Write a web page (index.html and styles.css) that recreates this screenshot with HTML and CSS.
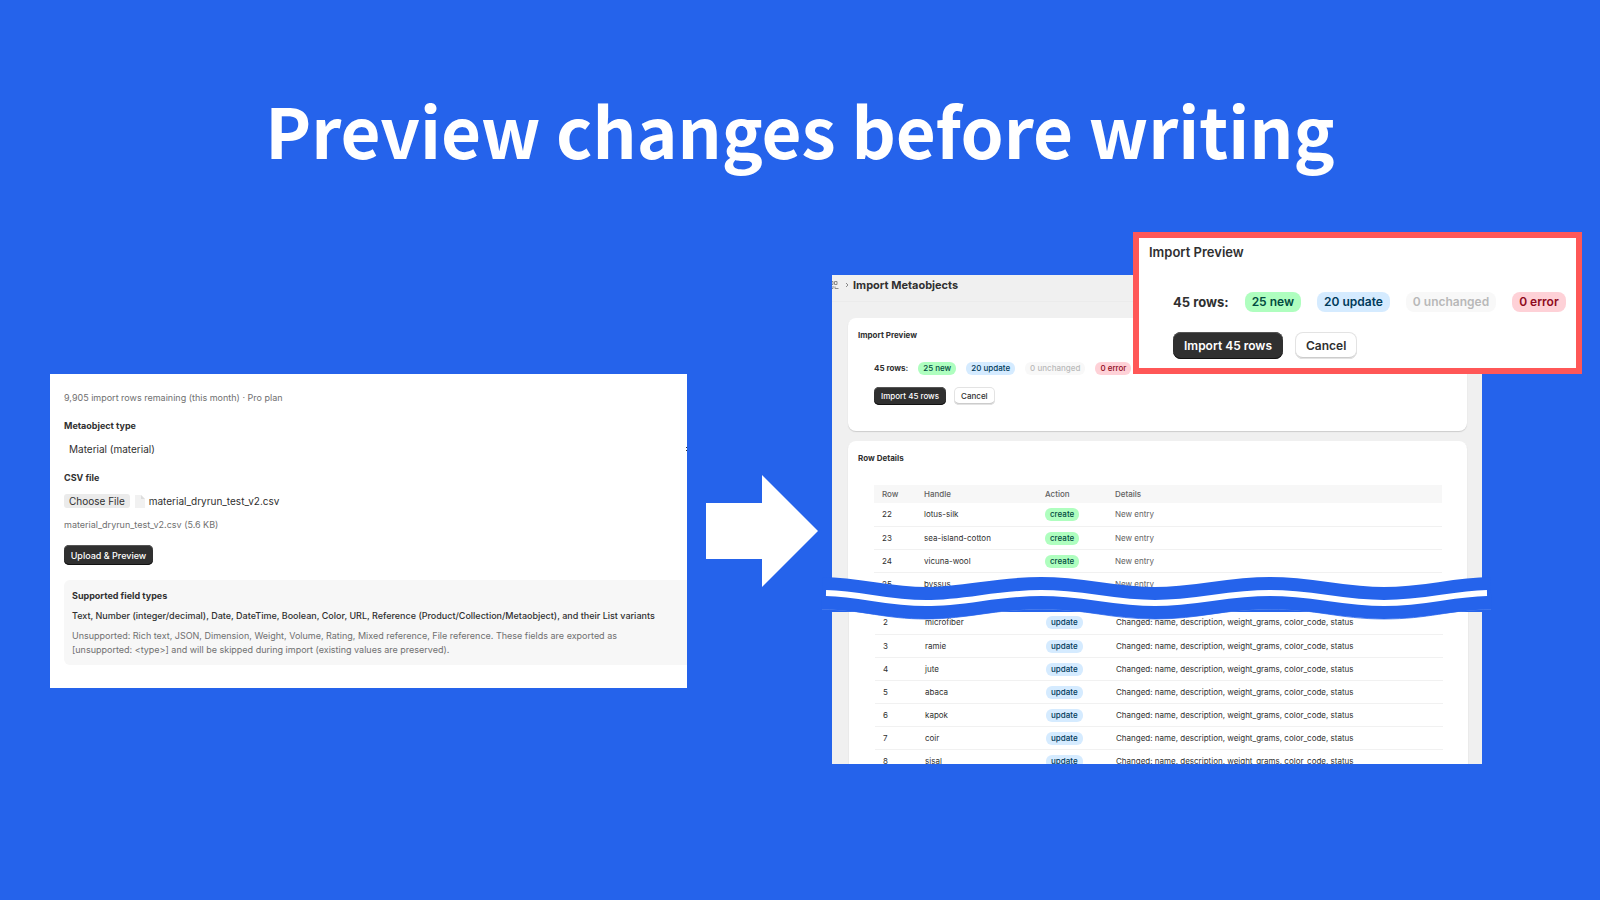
FILE: index.html
```html
<!DOCTYPE html>
<html lang="en">
<head>
	<title>Preview changes before writing</title>
	<meta charset="utf-8">
	<link rel="stylesheet" href="styles.css">
</head>
<body>
	<h1>Preview changes before writing</h1>
	<div id="stage">

		<!-- upload form -->
		<div id="upload">
			<p class="muted">9,905 import rows remaining (this month) · Pro plan</p>
			<label class="title" for="type">Metaobject type</label>
			<div class="selectwrap">
				<select id="type">
					<option>Material (material)</option>
				</select>
				<svg class="updown" viewBox="0 0 8 10"><path d="M1 4l3-3 3 3M1 6l3 3 3-3"/></svg>
			</div>
			<div class="title">CSV file</div>
			<div class="filerow">
				<input id="csv" type="file">
				<label class="choose" for="csv">Choose File</label>
				<svg class="doc" viewBox="0 0 10 13"><path class="page" d="M0 0h6l4 4v9H0z"/><path class="fold" d="M6 0v4h4z"/></svg>
				<span>material_dryrun_test_v2.csv</span>
			</div>
			<p class="muted">material_dryrun_test_v2.csv (5.6 KB)</p>
			<button class="dark">Upload &amp; Preview</button>
			<div class="types">
				<h2>Supported field types</h2>
				<p class="list">Text, Number (integer/decimal), Date, DateTime, Boolean, Color, URL, Reference (Product/Collection/Metaobject), and their List variants</p>
				<p class="muted">Unsupported: Rich text, JSON, Dimension, Weight, Volume, Rating, Mixed reference, File reference. These fields are exported as<br>[unsupported: &lt;type&gt;] and will be skipped during import (existing values are preserved).</p>
			</div>
		</div>

		<svg id="arrow" viewBox="0 0 112 112"><path d="M0 28h56V0l56 56-56 56V84H0z"/></svg>

		<!-- dry run result -->
		<div id="result">
			<div class="shot top">
				<div class="crumbs">
					<svg class="meta" viewBox="0 0 10 10"><path d="M1 1.5h3v3H1zM5.500 1.500h2.500v3H5.500zM1 8.500h3M4 6v2.500M6 6.500v2h3.500"/></svg>
					<svg class="chev" viewBox="0 0 4 6"><path d="M1 1l2 2-2 2"/></svg>
					<span>Import Metaobjects</span>
				</div>
				<div class="card preview">
					<h2>Import Preview</h2>
					<div class="counts">
						<b>45 rows:</b>
						<span class="chip green">25 new</span>
						<span class="chip blue">20 update</span>
						<span class="chip gray">0 unchanged</span>
						<span class="chip red">0 error</span>
					</div>
					<div class="buttons">
						<button class="dark">Import 45 rows</button>
						<button class="light">Cancel</button>
					</div>
				</div>
				<div class="card details">
					<h2>Row Details</h2>
					<table>
						<thead>
							<tr><th class="row">Row</th><th class="handle">Handle</th><th class="action">Action</th><th>Details</th></tr>
						</thead>
						<tbody class="new">
							<tr><td>22</td><td>lotus-silk</td><td><span class="chip green">create</span></td><td>New entry</td></tr>
							<tr><td>23</td><td>sea-island-cotton</td><td><span class="chip green">create</span></td><td>New entry</td></tr>
							<tr><td>24</td><td>vicuna-wool</td><td><span class="chip green">create</span></td><td>New entry</td></tr>
							<tr><td>25</td><td>byssus</td><td></td><td>New entry</td></tr>
						</tbody>
					</table>
				</div>
			</div>
			<div class="shot bottom">
				<div class="card">
					<table>
						<tbody>
							<tr><td class="row">2</td><td class="handle">microfiber</td><td class="action"><span class="chip blue">update</span></td><td>Changed: name, description, weight_grams, color_code, status</td></tr>
							<tr><td>3</td><td>ramie</td><td><span class="chip blue">update</span></td><td>Changed: name, description, weight_grams, color_code, status</td></tr>
							<tr><td>4</td><td>jute</td><td><span class="chip blue">update</span></td><td>Changed: name, description, weight_grams, color_code, status</td></tr>
							<tr><td>5</td><td>abaca</td><td><span class="chip blue">update</span></td><td>Changed: name, description, weight_grams, color_code, status</td></tr>
							<tr><td>6</td><td>kapok</td><td><span class="chip blue">update</span></td><td>Changed: name, description, weight_grams, color_code, status</td></tr>
							<tr><td>7</td><td>coir</td><td><span class="chip blue">update</span></td><td>Changed: name, description, weight_grams, color_code, status</td></tr>
							<tr><td>8</td><td>sisal</td><td><span class="chip blue">update</span></td><td>Changed: name, description, weight_grams, color_code, status</td></tr>
						</tbody>
					</table>
				</div>
			</div>

			<!-- torn strip between the two halves -->
			<svg id="wave" viewBox="0 0 661 42" preserveAspectRatio="none">
				<path class="edge" d="M-4 32C39 33 58 42 100 42S169 32 215 32 284 42 329 42 398 32 444 32 513 42 558 42 622 33 665 32"/>
				<path class="band" d="M-4 16C39 17 58 26 100 26S169 16 215 16 284 26 329 26 398 16 444 16 513 26 558 26 622 17 665 16"/>
				<path class="line" d="M0 16C39 17 58 26 100 26S169 16 215 16 284 26 329 26 398 16 444 16 513 26 558 26 622 17 661 16"/>
			</svg>
		</div>
	</div>

	<!-- enlarged summary -->
	<div id="callout" class="preview">
		<h2>Import Preview</h2>
		<div class="counts">
			<b>45 rows:</b>
			<span class="chip green">25 new</span>
			<span class="chip blue">20 update</span>
			<span class="chip gray">0 unchanged</span>
			<span class="chip red">0 error</span>
		</div>
		<div class="buttons">
			<button class="dark">Import 45 rows</button>
			<button class="light">Cancel</button>
		</div>
	</div>
</body>
</html>
```
FILE: styles.css
```css
* {
	box-sizing: border-box;
}
body {
	margin: 0;
	min-height: 100vh;
	position: relative;
	overflow-x: hidden;
	background-color: #2563EB;
	color: #303030;
	font-family: Inter, "Liberation Sans", sans-serif;
	font-size: 10px;
	line-height: 14px;
}
h1 {
	margin: 0;
	padding-top: 77px;
	height: 275px;
	color: #FFFFFF;
	font-family: "Noto Sans CJK JP", "Noto Sans", sans-serif;
	font-size: 69px;
	font-weight: bold;
	line-height: 104px;
	text-align: center;
}
h2, p {
	margin: 0;
}
button {
	font-family: inherit;
	border: 0;
	padding: 0;
}

#stage {
	display: grid;
	grid-template-columns: minmax(0, 656fr) 112px minmax(0, 664fr);
	align-items: center;
	padding: 0 118px 0 50px;
}

/* upload form */
#upload {
	height: 314px;
	margin-top: 23px;
	margin-right: 19px;
	padding: 17px 0 0 14px;
	overflow: hidden;
	background-color: #FFFFFF;
}
#upload .title {
	display: block;
	margin-top: 14px;
	font-size: 9px;
	font-weight: bold;
}
.muted {
	color: #707070;
	font-size: 9px;
}
.selectwrap {
	position: relative;
	margin-top: 8px;
	margin-right: -6px;
}
select {
	appearance: none;
	display: block;
	width: 100%;
	height: 16px;
	border: 0;
	padding: 0 5px;
	background: none;
	color: #303030;
	font-family: inherit;
	font-size: 10px;
}
.updown {
	position: absolute;
	right: 0;
	top: 3px;
	width: 8px;
	height: 10px;
	fill: none;
	stroke: #303030;
}
.filerow {
	display: flex;
	align-items: center;
	margin-top: 9px;
	margin-bottom: 10px;
}
#csv {
	position: absolute;
	width: 1px;
	height: 1px;
	opacity: 0;
}
.choose {
	padding: 0 5px;
	border-radius: 3px;
	background-color: #EBEBEB;
}
.doc {
	width: 10px;
	height: 13px;
	margin: 0 4px 0 5px;
}
.page {
	fill: #F1F1F1;
}
.fold {
	fill: #DDDDDD;
}
.dark {
	background-color: #303030;
	color: #FFFFFF;
	box-shadow: inset 0 -1px 0 #111111, inset 0 1px 0 #555555;
}
#upload .dark {
	display: block;
	width: 89px;
	height: 20px;
	margin-top: 13px;
	border-radius: 5px;
	font-size: 9px;
	font-weight: 500;
}
.types {
	margin-top: 15px;
	padding: 9px 0 8px 8px;
	border-radius: 6px 0 0 6px;
	background-color: #F7F7F7;
	font-size: 9px;
	white-space: nowrap;
}
.types h2 {
	font-size: 9px;
	font-weight: bold;
}
.types p {
	margin-top: 6px;
}
.types .list {
	font-weight: 500;
}

#arrow {
	width: 112px;
	height: 112px;
	margin-top: 23px;
	fill: #FFFFFF;
}

/* result page */
#result {
	position: relative;
	height: 489px;
	margin-left: 14px;
}
.shot {
	overflow: hidden;
	background-color: #F0F0F0;
	font-size: 8px;
}
.top {
	height: 322px;
}
.bottom {
	height: 152px;
	margin-top: 15px;
}
.crumbs {
	display: flex;
	align-items: center;
	height: 27px;
	padding-bottom: 6px;
	border-bottom: 1px solid #EBEBEB;
	font-size: 11px;
	font-weight: bold;
}
.crumbs svg {
	fill: none;
	stroke: #8A8A8A;
}
.meta {
	width: 10px;
	height: 10px;
	margin-left: -3px;
}
.chev {
	width: 4px;
	height: 6px;
	margin: 0 4px 0 6px;
}
.card {
	margin: 0 15px 0 16px;
	border-radius: 8px;
	background-color: #FFFFFF;
	box-shadow: 0 1px 1px #CCCCCC;
}
.card h2 {
	font-size: 8px;
	font-weight: bold;
}
.top .preview {
	height: 113px;
	margin-top: 16px;
	padding: 10px;
}
.counts, .buttons {
	display: flex;
	align-items: center;
}
.counts {
	gap: 10px;
	margin: 19px 0 0 16px;
}
.counts b {
	font-weight: bold;
	white-space: nowrap;
}
.chip {
	display: inline-block;
	padding: 0 5px;
	border-radius: 6px;
	font-weight: 500;
	line-height: 13px;
	white-space: nowrap;
}
.green {
	background-color: #AFFEBF;
	color: #014B40;
}
.blue {
	background-color: #D5EBFF;
	color: #003A5A;
}
.gray {
	background-color: #F8F8F8;
	color: #B8B8B8;
}
.red {
	background-color: #FED1D7;
	color: #8E0B21;
}
.buttons {
	gap: 8px;
	margin: 12px 0 0 16px;
}
.buttons button {
	height: 18px;
	padding: 0 7px;
	border-radius: 5px;
	font-size: 8px;
	font-weight: 500;
}
.light {
	background-color: #FFFFFF;
	color: #303030;
	box-shadow: inset 0 0 0 1px #E3E3E3, inset 0 -2px 0 #CCCCCC;
}
.details {
	height: 200px;
	margin-top: 10px;
	padding: 10px 25px 0 26px;
}
.details h2 {
	margin: 0 0 20px -16px;
}
table {
	width: 100%;
	border-collapse: collapse;
	table-layout: fixed;
}
th, td {
	height: 23px;
	padding: 0;
	border-bottom: 1px solid #F1F1F1;
	text-align: left;
}
th {
	height: 18px;
	border: 0;
	background-color: #F7F7F7;
	color: #616161;
	font-weight: 500;
}
th:first-child, td:first-child {
	padding-left: 8px;
}
.new td:last-child {
	color: #616161;
}
.row {
	width: 50px;
}
.handle {
	width: 121px;
}
.action {
	width: 70px;
}
.bottom .card {
	margin: -1px 14px 0 17px;
	padding: 0 25px 0 26px;
	border-radius: 0;
}

#wave {
	position: absolute;
	left: -6px;
	top: 302px;
	width: calc(100% + 11px);
	height: 42px;
	overflow: visible;
	fill: none;
}
.band {
	stroke: #2563EB;
	stroke-width: 32;
}
.edge {
	stroke: #5C8AF0;
}
.line {
	stroke: #FFFFFF;
	stroke-width: 6;
}

/* enlarged summary */
#callout {
	position: absolute;
	top: 232px;
	right: 18px;
	width: 449px;
	height: 142px;
	padding: 4px 10px;
	border: 6px solid #FF5757;
	background-color: #FFFFFF;
	font-size: 12px;
	line-height: 20px;
}
#callout h2 {
	font-size: 13px;
	font-weight: 600;
}
#callout .counts {
	gap: 16px;
	margin: 30px 0 0 24px;
}
#callout b {
	font-size: 13px;
}
#callout .chip {
	padding: 0 7px;
	border-radius: 8px;
	font-weight: 600;
	line-height: 20px;
}
#callout .buttons {
	gap: 12px;
	margin: 20px 0 0 24px;
}
#callout button {
	height: 27px;
	padding: 0 11px;
	border-radius: 8px;
	font-size: 12px;
	font-weight: 600;
}
```
